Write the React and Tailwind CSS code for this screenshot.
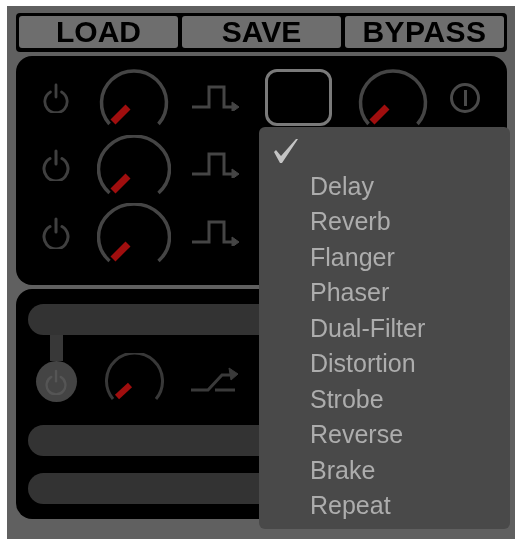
import React from 'react'

const effects = ['Delay', 'Reverb', 'Flanger', 'Phaser', 'Dual-Filter', 'Distortion', 'Strobe', 'Reverse', 'Brake', 'Repeat']

function Power({ size = 28, color = '#404040' }) {
  return (
    <svg width={size} height={size + 4} viewBox="0 0 28 32" fill="none" stroke={color} strokeWidth="3" strokeLinecap="round">
      <path d="M8 9.5A12 12 0 1 0 20 9.5" />
      <path d="M14 2V15" />
    </svg>
  )
}

function Knob({ h = 60, rx = 35.5, ry = 33, stroke = '#454545' }) {
  return (
    <svg width="74" height={h} viewBox={`0 0 74 ${h}`} fill="none">
      <path d={`M12.5 ${h - 2}A${rx} ${ry} 0 1 1 61.5 ${h - 2}`} stroke={stroke} strokeWidth="3.5" />
      <path d={`M16 ${h - 4}L31 ${h - 19}`} stroke="#a00e0e" strokeWidth="7" />
    </svg>
  )
}

function Pulse() {
  return (
    <svg width="48" height="26" viewBox="0 0 48 26" fill="none" stroke="#454545" strokeWidth="3">
      <path d="M0 22H17V2H32V22H43" />
      <path d="M40 17L47 22L40 27Z" fill="#454545" strokeWidth="1" />
    </svg>
  )
}

function SmallKnob() {
  return (
    <svg width="60" height="47" viewBox="0 0 60 47" fill="none">
      <path d="M9 46A28 28 0 1 1 52 46" stroke="#383838" strokeWidth="3" />
      <path d="M13 44L26 32" stroke="#a00e0e" strokeWidth="6" />
    </svg>
  )
}

function Ramp() {
  return (
    <svg width="48" height="26" viewBox="0 0 48 26" fill="none" stroke="#3a3a3a" strokeWidth="3">
      <path d="M0 23H17L31 8H41" />
      <path d="M24 23H44" />
      <path d="M38 1L47 7L40 13Z" fill="#3a3a3a" strokeWidth="1" />
    </svg>
  )
}

function Button({ label, className = '' }) {
  return (
    <button className={`flex w-[159px] items-center justify-center rounded-[3px] bg-[#6e6e6e] text-[30px] leading-none font-bold text-black ${className}`}>
      {label}
    </button>
  )
}

function Bar() {
  return <div className="h-[31px] rounded-l-full bg-[#333333]" />
}

export default function App() {
  return (
    <div className="min-h-screen bg-white pt-[6px] pl-[7px] font-['Liberation_Sans',Arial,sans-serif]">
      <div className="relative h-[533px] w-[508px] bg-[#606060] pt-[7px] pl-[9px] blur-[0.6px]">
        {/* Top buttons */}
        <div className="flex h-[39px] w-[491px] gap-1 rounded-[4px] bg-black px-[3px] pt-[3px] pb-[4px]">
          <Button label="LOAD" />
          <Button label="SAVE" />
          <Button label="BYPASS" className="tracking-[0.5px]" />
        </div>

        {/* FX slots */}
        <div className="mt-1 h-[229px] w-[491px] rounded-[16px] bg-black pt-[13px]">
          <div className="grid h-[57px] grid-cols-[80px_76px_88px_76px_114px_30px] items-center justify-items-center">
            <Power size={26} />
            <Knob h={57} rx={32.5} ry={32} />
            <Pulse />
            <div className="h-[57px] w-[67px] rounded-[12px] border-[3px] border-[#7a7a7a]" />
            <Knob h={57} rx={32.5} ry={32} />
            <div className="flex h-[30px] w-[30px] items-center justify-center rounded-full border-[3px] border-[#4a4a4a]">
              <div className="h-[16px] w-[3px] bg-[#4a4a4a]" />
            </div>
          </div>
          <div className="mt-[9px] grid h-[60px] grid-cols-[80px_76px_88px] items-center justify-items-center">
            <Power />
            <Knob />
            <Pulse />
          </div>
          <div className="mt-2 grid h-[60px] grid-cols-[80px_76px_88px] items-center justify-items-center">
            <Power />
            <Knob />
            <Pulse />
          </div>
        </div>

        {/* Master section */}
        <div className="mt-1 h-[230px] w-[491px] rounded-[16px] bg-black px-3 pt-[15px]">
          <Bar />
          <div className="grid h-[90px] grid-cols-[56px_100px_62px] justify-items-center">
            <div className="flex flex-col items-center">
              <div className="h-[26px] w-[13px] bg-[#383838]" />
              <div className="flex h-[41px] w-[41px] items-center justify-center rounded-full bg-[#444444]">
                <Power size={22} color="#555555" />
              </div>
            </div>
            <div className="mt-[18px]">
              <SmallKnob />
            </div>
            <div className="mt-[32px]">
              <Ramp />
            </div>
          </div>
          <Bar />
          <div className="mt-[17px]">
            <Bar />
          </div>
        </div>

        {/* Effect menu */}
        <div className="absolute top-[121px] left-[252px] h-[402px] w-[251px] rounded-[6px] bg-[#494949] pt-[6px]">
          <div className="flex h-[35.5px] items-center pl-[14px]">
            <svg width="26" height="26" viewBox="0 0 26 26" fill="#c4c4c4">
              <path d="M1 14L3 12L8 18L23 1L25 1L9 25H7Z" />
            </svg>
          </div>
          {effects.map((name) => (
            <div key={name} className="flex h-[35.5px] items-center pl-[51px] text-[25px] leading-none text-[#adadad]">
              {name}
            </div>
          ))}
        </div>
      </div>
    </div>
  )
}
